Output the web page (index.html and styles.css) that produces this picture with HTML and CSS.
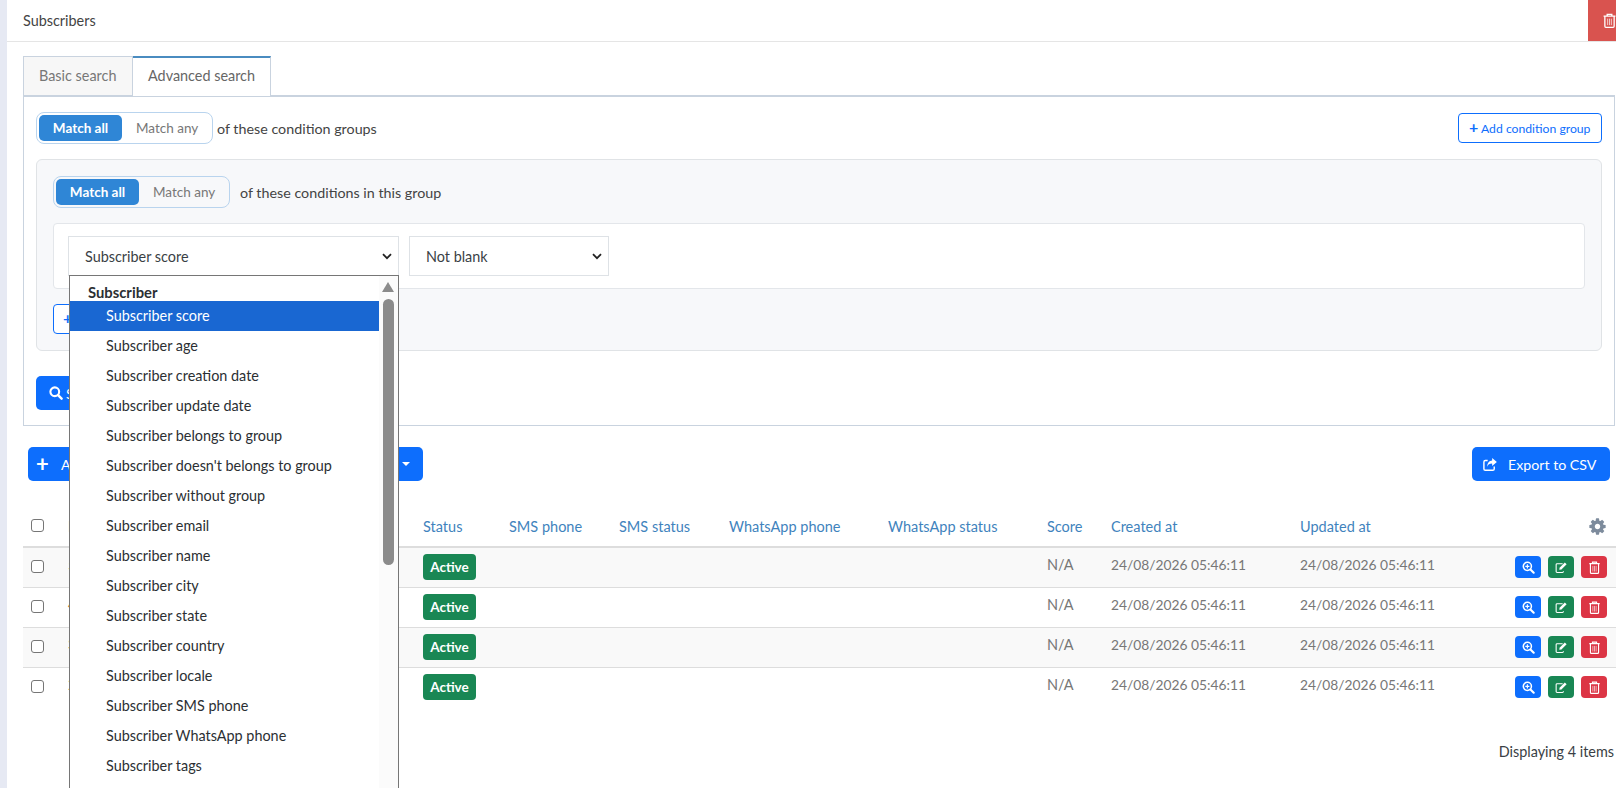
FILE: index.html
```html
<!DOCTYPE html>
<html lang="en">
<head>
    <meta charset="UTF-8">
    <meta name="viewport" content="width=device-width, initial-scale=1.0">
    <title>Subscribers</title>
    <link rel="stylesheet" href="styles.css">
</head>
<body>
    <svg class="icon-defs" aria-hidden="true">
        <symbol id="i-trash" viewBox="0 0 14 16">
            <path d="M4.5 3V1.4h5V3M.6 3.2h12.8M2 3.4v10.7c0 .7.5 1.2 1.1 1.2h7.8c.6 0 1.100-.5 1.100-1.200V3.400" fill="none" stroke="currentColor" stroke-width="1.400"/>
            <path d="M5 6v7M7 6v7M9 6v7" fill="none" stroke="currentColor" stroke-width="1" opacity=".75"/>
        </symbol>
        <symbol id="i-search" viewBox="0 0 16 16">
            <circle cx="6.600" cy="6.600" r="5" fill="none" stroke="currentColor" stroke-width="2.400"/>
            <path d="M10.400 10.400l4 4" stroke="currentColor" stroke-width="2.800" stroke-linecap="round"/>
        </symbol>
        <symbol id="i-zoom" viewBox="0 0 16 16">
            <circle cx="6.600" cy="6.600" r="5" fill="none" stroke="currentColor" stroke-width="1.900"/>
            <path d="M6.600 4.100v5M4.100 6.600h5" stroke="currentColor" stroke-width="1.400"/>
            <path d="M10.400 10.400l4 4" stroke="currentColor" stroke-width="2.600" stroke-linecap="round"/>
        </symbol>
        <symbol id="i-edit" viewBox="0 0 17 16">
            <path d="M11 13v.3c0 .6-.5 1.200-1.200 1.200H2.700c-.7 0-1.200-.6-1.200-1.200V4.200C1.500 3.500 2 3 2.700 3H10" fill="none" stroke="currentColor" stroke-width="1.400"/>
            <path d="M6 8.300L12.800 1.500l2.400 2.400L8.400 10.700 5.600 11.100z" fill="currentColor"/>
        </symbol>
        <symbol id="i-share" viewBox="0 0 16 16">
            <path d="M12.500 10v2.700c0 .9-.6 1.500-1.500 1.500H3c-.9 0-1.500-.6-1.500-1.500V5.300c0-.9.600-1.500 1.500-1.500h2.500" fill="none" stroke="currentColor" stroke-width="1.500"/>
            <path d="M10.300 1l5 4.300-5 4.300V7C7.500 7 5.800 7.800 5 10.500 5 6.500 7.300 3.800 10.300 3.700z" fill="currentColor"/>
        </symbol>
        <symbol id="i-cog" viewBox="0 0 1792 1792">
            <path fill="currentColor" d="M1152 896q0-106-75-181t-181-75-181 75-75 181 75 181 181 75 181-75 75-181zm512-109v222q0 12-8 23t-20 13l-185 28q-19 54-39 91 35 50 107 138 10 12 10 25t-9 23q-27 37-99 108t-94 71q-12 0-26-9l-138-108q-44 23-91 38-16 136-29 186-7 28-36 28h-222q-14 0-24.500-8.500t-11.500-21.500l-28-184q-49-16-90-37l-141 107q-10 9-25 9-14 0-25-11-126-114-165-168-7-10-7-23 0-12 8-23 15-21 51-66.500t54-70.500q-27-50-41-99l-183-27q-13-2-21-12.500t-8-23.500v-222q0-12 8-23t19-13l186-28q14-46 39-92-40-57-107-138-10-12-10-24 0-10 9-23 26-36 98.500-107.500t94.500-71.500q13 0 26 10l138 107q44-23 91-38 16-136 29-186 7-28 36-28h222q14 0 24.500 8.500t11.500 21.500l28 184q49 16 90 37l142-107q9-9 24-9 13 0 25 10 129 119 165 170 7 8 7 22 0 12-8 23-15 21-51 66.500t-54 70.500q26 50 41 98l183 28q13 2 21 12.500t8 23.500z"/>
        </symbol>
    </svg>

    <div class="main">
        <div class="page-head">
            <div class="page-title">Subscribers</div>
            <button class="head-delete"><svg class="icon-head"><use href="#i-trash"/></svg></button>
        </div>

        <div class="content">
            <div class="tabs">
                <div class="tab">Basic search</div>
                <div class="tab tab-active">Advanced search</div>
            </div>

            <div class="search-panel">
                <div class="match-row">
                    <div class="match-switch">
                        <span class="match-on">Match all</span>
                        <span class="match-off">Match any</span>
                    </div>
                    <span class="match-label">of these condition groups</span>
                    <button class="btn-outline btn-add-group"><span class="plus">+</span> Add condition group</button>
                </div>

                <div class="condition-group">
                    <div class="match-row">
                        <div class="match-switch">
                            <span class="match-on">Match all</span>
                            <span class="match-off">Match any</span>
                        </div>
                        <span class="match-label match-label-wide">of these conditions in this group</span>
                    </div>

                    <div class="condition">
                        <select class="field field-name">
                            <option>Subscriber score</option>
                        </select>
                        <select class="field field-op">
                            <option>Not blank</option>
                        </select>

                        <div class="dropdown">
                            <div class="dropdown-list">
                                <div class="opt-group">Subscriber</div>
                                <div class="opt opt-selected">Subscriber score</div>
                                <div class="opt">Subscriber age</div>
                                <div class="opt">Subscriber creation date</div>
                                <div class="opt">Subscriber update date</div>
                                <div class="opt">Subscriber belongs to group</div>
                                <div class="opt">Subscriber doesn't belongs to group</div>
                                <div class="opt">Subscriber without group</div>
                                <div class="opt">Subscriber email</div>
                                <div class="opt">Subscriber name</div>
                                <div class="opt">Subscriber city</div>
                                <div class="opt">Subscriber state</div>
                                <div class="opt">Subscriber country</div>
                                <div class="opt">Subscriber locale</div>
                                <div class="opt">Subscriber SMS phone</div>
                                <div class="opt">Subscriber WhatsApp phone</div>
                                <div class="opt">Subscriber tags</div>
                            </div>
                            <div class="dropdown-scroll">
                                <div class="scroll-up"></div>
                                <div class="scroll-thumb"></div>
                            </div>
                        </div>
                    </div>

                    <button class="btn-outline btn-add-condition"><span class="plus">+</span> Add condition</button>
                </div>

                <button class="btn-primary btn-search"><svg class="icon-search"><use href="#i-search"/></svg> Search</button>
            </div>

            <div class="toolbar">
                <button class="btn-primary btn-actions">
                    <span class="plus-big">+</span>
                    <span>Add subscriber</span>
                    <span class="caret"></span>
                </button>
                <button class="btn-primary btn-export"><svg class="icon-export"><use href="#i-share"/></svg>Export to CSV</button>
            </div>

            <table class="subs">
                <colgroup>
                    <col class="c-check"><col class="c-id"><col class="c-status"><col class="c-sms">
                    <col class="c-sms"><col class="c-wa"><col class="c-wa"><col class="c-score">
                    <col class="c-date"><col class="c-updated"><col>
                </colgroup>
                <thead>
                    <tr>
                        <th class="cell-check"><span class="check"></span></th>
                        <th class="cell-id-head">ID</th>
                        <th>Status</th>
                        <th>SMS phone</th>
                        <th>SMS status</th>
                        <th>WhatsApp phone</th>
                        <th>WhatsApp status</th>
                        <th>Score</th>
                        <th>Created at</th>
                        <th>Updated at</th>
                        <th class="cell-actions"><svg class="icon-gear"><use href="#i-cog"/></svg></th>
                    </tr>
                </thead>
                <tbody>
                    <tr>
                        <td class="cell-check"><span class="check"></span></td>
                        <td class="cell-text cell-id">5</td>
                        <td><span class="badge">Active</span></td>
                        <td></td><td></td><td></td><td></td>
                        <td class="cell-text">N/A</td>
                        <td class="cell-text cell-date">24/08/2026 05:46:11</td>
                        <td class="cell-text cell-date">24/08/2026 05:46:11</td>
                        <td class="cell-actions">
                            <span class="act act-view"><svg><use href="#i-zoom"/></svg></span>
                            <span class="act act-edit"><svg><use href="#i-edit"/></svg></span>
                            <span class="act act-del"><svg><use href="#i-trash"/></svg></span>
                        </td>
                    </tr>
                    <tr>
                        <td class="cell-check"><span class="check"></span></td>
                        <td class="cell-text cell-id">4</td>
                        <td><span class="badge">Active</span></td>
                        <td></td><td></td><td></td><td></td>
                        <td class="cell-text">N/A</td>
                        <td class="cell-text cell-date">24/08/2026 05:46:11</td>
                        <td class="cell-text cell-date">24/08/2026 05:46:11</td>
                        <td class="cell-actions">
                            <span class="act act-view"><svg><use href="#i-zoom"/></svg></span>
                            <span class="act act-edit"><svg><use href="#i-edit"/></svg></span>
                            <span class="act act-del"><svg><use href="#i-trash"/></svg></span>
                        </td>
                    </tr>
                    <tr>
                        <td class="cell-check"><span class="check"></span></td>
                        <td class="cell-text cell-id">3</td>
                        <td><span class="badge">Active</span></td>
                        <td></td><td></td><td></td><td></td>
                        <td class="cell-text">N/A</td>
                        <td class="cell-text cell-date">24/08/2026 05:46:11</td>
                        <td class="cell-text cell-date">24/08/2026 05:46:11</td>
                        <td class="cell-actions">
                            <span class="act act-view"><svg><use href="#i-zoom"/></svg></span>
                            <span class="act act-edit"><svg><use href="#i-edit"/></svg></span>
                            <span class="act act-del"><svg><use href="#i-trash"/></svg></span>
                        </td>
                    </tr>
                    <tr>
                        <td class="cell-check"><span class="check"></span></td>
                        <td class="cell-text cell-id">2</td>
                        <td><span class="badge">Active</span></td>
                        <td></td><td></td><td></td><td></td>
                        <td class="cell-text">N/A</td>
                        <td class="cell-text cell-date">24/08/2026 05:46:11</td>
                        <td class="cell-text cell-date">24/08/2026 05:46:11</td>
                        <td class="cell-actions">
                            <span class="act act-view"><svg><use href="#i-zoom"/></svg></span>
                            <span class="act act-edit"><svg><use href="#i-edit"/></svg></span>
                            <span class="act act-del"><svg><use href="#i-trash"/></svg></span>
                        </td>
                    </tr>
                </tbody>
            </table>

            <div class="table-foot">Displaying 4 items</div>
        </div>
    </div>
</body>
</html>
```

FILE: styles.css
```css
* {
    box-sizing: border-box;
}

html, body {
    height: 100%;
}

body {
    font-family: Lato, "Noto Sans", sans-serif;
    font-size: 14.4px;
    color: #3a3f45;
    background-color: #e6e9f3;
    margin: 0;
    overflow: hidden;
}

button {
    font-family: inherit;
    cursor: pointer;
}

.icon-defs {
    display: none;
}

.main {
    margin-left: 7px;
    height: 788px;
    background-color: white;
    overflow: hidden;
}

.page-head {
    display: flex;
    justify-content: space-between;
    height: 42px;
    border-bottom: 1px solid #e5e5e5;
}

.page-title {
    padding: 12px 0 0 16px;
    font-size: 14.4px;
    line-height: 17px;
    color: #444;
}

.head-delete {
    width: 28px;
    height: 41px;
    padding: 0 0 0 15px;
    border: none;
    background-color: #d9534f;
    color: white;
    text-align: left;
    overflow: hidden;
}

.icon-head {
    display: block;
    width: 13px;
    height: 15px;
}

.content {
    padding: 14px 0 0 16px;
}

/* Tabs */
.tabs {
    display: flex;
    height: 39px;
}

.tab {
    padding: 10px 15px 0;
    width: 110px;
    border: 1px solid #c9d3df;
    border-bottom: none;
    background-color: #f7f7f7;
    color: #777;
    white-space: nowrap;
}

.tab-active {
    width: 138px;
    margin-bottom: -1px;
    height: 40px;
    border-left: none;
    border-top: 2px solid #4a8cc0;
    padding-top: 9px;
    background-color: white;
    color: #666;
    position: relative;
}

.search-panel {
    height: 331px;
    margin-right: 1px;
    padding: 15px 12px 0;
    border: 1px solid #c9d3df;
    border-top: 2px solid #c9d3df;
}

.match-row {
    display: flex;
    align-items: center;
    height: 32px;
}

.match-switch {
    display: flex;
    align-items: center;
    width: 177px;
    height: 32px;
    padding: 0 2px;
    border: 1px solid #b9d4ee;
    border-radius: 8px;
}

.match-on {
    width: 83px;
    height: 26px;
    line-height: 26px;
    text-align: center;
    border-radius: 5px;
    background-color: #2f86d6;
    color: white;
    font-size: 13.5px;
    font-weight: 700;
}

.match-off {
    padding-left: 14px;
    color: #777;
    font-size: 13.5px;
}

.match-label {
    margin-left: 4px;
    font-size: 14.3px;
    color: #444;
}

.match-label-wide {
    margin-left: 10px;
}

.btn-outline {
    border: 1px solid #0d6efd;
    border-radius: 4px;
    background-color: white;
    color: #0d6efd;
    font-size: 12.2px;
    text-align: left;
    white-space: nowrap;
}

.plus {
    font-weight: 700;
    font-size: 16px;
    line-height: 14px;
}

.btn-add-group {
    margin-left: auto;
    width: 144px;
    height: 30px;
    padding: 0 0 0 10px;
}

.condition-group {
    height: 192px;
    margin-top: 15px;
    padding: 16px;
    background-color: #f7f8fa;
    border: 1px solid #e0e3e6;
    border-radius: 6px;
}

.condition {
    display: flex;
    gap: 10px;
    position: relative;
    height: 66px;
    margin-top: 15px;
    padding: 12px 14px;
    background-color: white;
    border: 1px solid #e3e6ea;
    border-radius: 4px;
}

.field {
    height: 40px;
    padding: 0 16px;
    font-family: inherit;
    font-size: 14.4px;
    color: #3a3f45;
    background-color: white;
    background-image: url("data:image/svg+xml,%3Csvg xmlns='http://www.w3.org/2000/svg' viewBox='0 0 10 7'%3E%3Cpath d='M1 1.200l4 4 4-4' fill='none' stroke='%23222' stroke-width='1.800'/%3E%3C/svg%3E");
    background-repeat: no-repeat;
    background-position: right 6px center;
    background-size: 10px 7px;
    border: 1px solid #dee2e6;
    border-radius: 0;
    appearance: none;
}

.field-name {
    width: 331px;
}

.field-op {
    width: 200px;
}

.btn-add-condition {
    width: 160px;
    height: 30px;
    margin-top: 15px;
    padding: 0 0 0 9px;
}

.btn-primary {
    border: none;
    border-radius: 5px;
    background-color: #0d6efd;
    color: white;
    font-size: 14.2px;
    white-space: nowrap;
}

.btn-search {
    display: flex;
    align-items: center;
    gap: 3px;
    width: 110px;
    height: 34px;
    margin-top: 25px;
    padding: 0 13px;
}

.icon-search {
    width: 14px;
    height: 14px;
}

/* Open list of the first select, it hangs over the rest of the page */
.dropdown {
    display: flex;
    position: absolute;
    top: 51px;
    left: 15px;
    z-index: 10;
    width: 330px;
    height: 560px;
    background-color: white;
    border: 1px solid #767676;
}

.dropdown-list {
    flex: 1;
}

.opt-group {
    height: 25px;
    padding: 7px 0 0 18px;
    line-height: 18px;
    font-size: 14.8px;
    font-weight: 700;
    color: #2b2f33;
}

.opt {
    height: 30px;
    line-height: 30px;
    padding-left: 36px;
    color: #2b2f33;
}

.opt-selected {
    background-color: #1967d2;
    color: white;
}

.dropdown-scroll {
    width: 19px;
    position: relative;
    background-color: #fbfbfb;
}

.scroll-up {
    position: absolute;
    top: 6px;
    left: 3px;
    border-left: 6.5px solid transparent;
    border-right: 6.5px solid transparent;
    border-bottom: 10px solid #8b8b8b;
}

.scroll-thumb {
    position: absolute;
    top: 23px;
    left: 4px;
    width: 11px;
    height: 266px;
    border-radius: 6px;
    background-color: #8b8b8b;
}

.toolbar {
    display: flex;
    justify-content: space-between;
    margin-top: 21px;
    padding: 0 6px 0 5px;
}

.btn-actions {
    display: flex;
    align-items: center;
    width: 395px;
    height: 34px;
    padding: 0 13px 0 8px;
}

.plus-big {
    width: 25px;
    font-size: 22px;
    line-height: 24px;
    font-weight: 700;
    text-align: left;
}

.caret {
    margin-left: auto;
    border-left: 4px solid transparent;
    border-right: 4px solid transparent;
    border-top: 4px solid white;
}

.btn-export {
    display: flex;
    align-items: center;
    width: 138px;
    height: 34px;
    padding: 0 0 0 10px;
}

.icon-export {
    width: 16px;
    height: 15px;
    margin-right: 10px;
}

/* Table */
.subs {
    table-layout: fixed;
    width: 1593px;
    margin-top: 24px;
    border-collapse: collapse;
}

.c-check { width: 45px; }
.c-id { width: 355px; }
.c-status { width: 86px; }
.c-sms { width: 110px; }
.c-wa { width: 159px; }
.c-score { width: 64px; }
.c-date { width: 189px; }
.c-updated { width: 200px; }

.subs th {
    height: 42px;
    padding: 2px 0 0;
    text-align: left;
    font-weight: 400;
    font-size: 14.5px;
    color: #3f83bd;
    border-bottom: 2px solid #ddd;
}

.subs td {
    height: 40px;
    padding: 0;
    font-size: 14.5px;
    color: #777;
    border-bottom: 1px solid #ddd;
}

.subs tbody tr:nth-child(odd) {
    background-color: #f9f9f9;
}

.subs tbody tr:last-child td {
    border-bottom: none;
}

.subs th.cell-check {
    padding: 0 0 0 8px;
}

.subs td.cell-check {
    padding: 0 0 2px 8px;
}

.check {
    display: block;
    width: 13px;
    height: 13px;
    background-color: white;
    border: 1px solid #767676;
    border-radius: 3px;
}

.subs td.cell-text {
    padding-bottom: 6px;
}

.subs td.cell-date {
    font-size: 13.8px;
}

.subs td.cell-id {
    color: #c77a35;
}

.subs th.cell-id-head {
    color: #d77f7f;
}

.badge {
    display: block;
    width: 53px;
    height: 26px;
    line-height: 26px;
    text-align: center;
    border-radius: 4px;
    background-color: #198754;
    color: white;
    font-size: 13.5px;
    font-weight: 700;
}

.subs .cell-actions {
    padding-right: 9px;
    text-align: right;
    white-space: nowrap;
    font-size: 0;
}

.icon-gear {
    width: 19px;
    height: 19px;
    color: #7d8b9c;
    vertical-align: middle;
}

.act {
    display: inline-flex;
    align-items: center;
    justify-content: center;
    width: 26px;
    height: 22px;
    margin-left: 7px;
    border-radius: 4px;
    color: white;
    vertical-align: middle;
}

.act svg {
    width: 13px;
    height: 13px;
}

.act-view { background-color: #0d6efd; }
.act-edit { background-color: #198754; }
.act-del { background-color: #dc3545; }

.table-foot {
    margin-top: 36px;
    padding-right: 2px;
    text-align: right;
    font-size: 14.4px;
    color: #3a3f45;
}
```
